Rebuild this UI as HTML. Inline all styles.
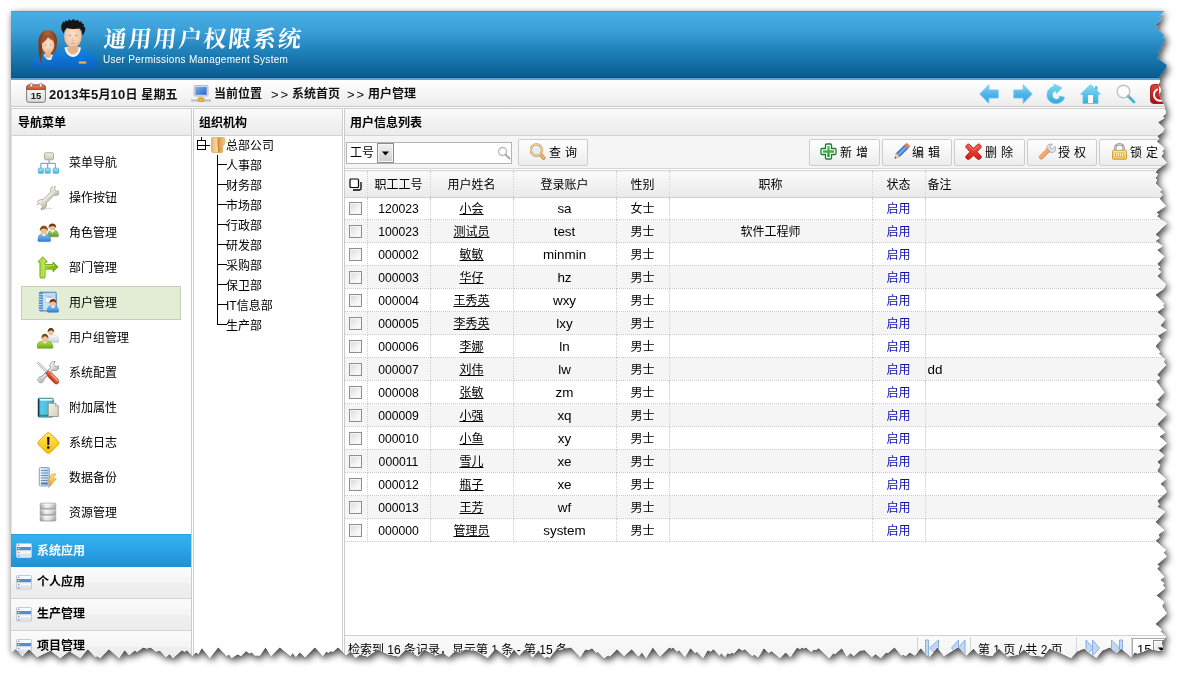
<!DOCTYPE html>
<html lang="zh-CN">
<head>
<meta charset="utf-8">
<title>通用用户权限系统</title>
<style>
*{box-sizing:border-box;margin:0;padding:0}
html,body{width:1185px;height:676px;overflow:hidden;background:#fff}
body{font-family:"Liberation Sans","Noto Sans CJK SC",sans-serif;font-size:12px;color:#000;position:relative}
#shadow{position:absolute;left:0;top:0;width:1185px;height:676px;filter:drop-shadow(2.500px 3.500px 3.500px rgba(0,0,0,.72)) drop-shadow(-1px 0 3px rgba(0,0,0,.07))}
#page{position:absolute;left:0;top:0;width:1185px;height:676px;background:#fff;overflow:hidden;clip-path:polygon(11px 11px,1164.4px 11px,1159.5px 16.3px,1162px 19.5px,1155.4px 24.4px,1157.9px 26.8px,1156.3px 28.5px,1164.4px 35px,1162.8px 37.4px,1166px 39.8px,1161.1px 44.7px,1162.8px 46.3px,1157.9px 52px,1160.3px 54.5px,1157px 57.7px,1166.8px 65px,1166px 68.3px,1158.7px 78px,1160.3px 81.3px,1158.2px 84.5px,1162px 90.2px,1158.7px 94.3px,1160.3px 97.5px,1164.4px 105.7px,1165.2px 110px,1166px 113.3px,1162.8px 116.5px,1164.4px 118.1px,1157.9px 122.2px,1164.4px 128.7px,1162.8px 132px,1157.1px 136px,1159.5px 139.3px,1156.3px 140.9px,1164.4px 148.2px,1162px 151.5px,1163.6px 153.1px,1161.1px 156.3px,1166.8px 162.8px,1157.9px 169.3px,1155.4px 172.6px,1157.9px 174.2px,1155.4px 178.3px,1157.1px 179.9px,1155.4px 183.2px,1162px 189.7px,1159.5px 192.1px,1162.8px 194.6px,1159.5px 198.6px,1166px 205.9px,1156.3px 212.4px,1158.7px 214px,1157.1px 216.5px,1162px 220px,1166.8px 223.3px,1155.4px 234.6px,1159.5px 237.9px,1155.4px 241.1px,1162.8px 246px,1157.1px 250.1px,1164.4px 256.6px,1157.1px 263.9px,1160.3px 267.2px,1157.9px 268.8px,1161.1px 272px,1157.1px 276.1px,1166px 284.2px,1163.6px 289.1px,1155.4px 294.8px,1164.4px 303.7px,1162.8px 305.4px,1164.4px 307px,1157.1px 311.9px,1165.2px 319.2px,1160.3px 325.7px,1164.4px 328.5px,1166.8px 330px,1157.9px 335.7px,1161.1px 339.8px,1155.4px 346.3px,1160.3px 352px,1158.7px 353.6px,1165.2px 359.3px,1163.6px 361.7px,1166px 365px,1157.1px 374.7px,1160.3px 378px,1156.3px 381.2px,1164.4px 392.6px,1157.1px 399.9px,1159.5px 401.5px,1155.4px 404.8px,1166.8px 414.6px,1157.1px 424.3px,1165.2px 432.4px,1159.5px 436.5px,1163.6px 440px,1166.8px 443.3px,1158.7px 450.6px,1164.4px 455.4px,1157.1px 462px,1160.3px 465.2px,1157.1px 470.9px,1166px 479px,1160.3px 483.9px,1164.4px 487.2px,1166.8px 492px,1157.1px 501px,1159.5px 504.2px,1157.1px 506.7px,1165.2px 511.5px,1155.4px 522.1px,1164.4px 530.2px,1158.7px 534.3px,1159.5px 537.6px,1155.4px 540.8px,1166px 550px,1163.6px 552.4px,1166.8px 556.5px,1157.1px 564.6px,1159.5px 566.3px,1157.1px 568.7px,1164.4px 576.8px,1160.3px 580.1px,1164.4px 583.3px,1162.8px 585px,1165.2px 588.2px,1156.3px 595.5px,1164.4px 602px,1162px 606.1px,1166.8px 613.4px,1155.4px 624px,1162px 629.7px,1160.3px 631.3px,1166px 636.2px,1164.4px 638.5px,1161.5px 642px,1163.3px 650.5px,1158px 650.6px,1153px 649.8px,1149.5px 648.5px,1144.4px 651px,1137.6px 653.5px,1134.7px 652.2px,1131.1px 657px,1121.2px 648.4px,1116.5px 652.7px,1109.8px 647.2px,1102.2px 650.5px,1096.3px 657.7px,1089.1px 652.7px,1084px 648.4px,1076.9px 651.4px,1071px 657.9px,1060px 652.7px,1049.5px 648.4px,1043.1px 656.5px,1030px 655.2px,1024.1px 649.3px,1018.2px 654.8px,1007.3px 656.5px,998.8px 648.4px,992.1px 656px,978.1px 653.9px,973.5px 648.4px,966.3px 655.6px,960px 648.4px,957.9px 647.2px,944px 656px,937.2px 647.2px,930px 656.5px,927.1px 655.6px,920.8px 648px,914.9px 655.6px,909.8px 652.2px,905.6px 656px,903px 654.3px,901.4px 655.6px,894.6px 647.2px,887.8px 653.1px,886.2px 652.2px,880.7px 657.9px,875.6px 653.9px,871.8px 656.9px,864.6px 650.1px,860px 650.5px,853.7px 656px,850.7px 653.1px,846.9px 656.5px,841.9px 648px,834.7px 654.3px,833.4px 653.1px,829.2px 657.9px,818.6px 648px,815.7px 650.1px,814px 649.3px,811.1px 651.8px,806px 647.2px,803.9px 648.4px,802.2px 647.2px,799.7px 648.9px,797.1px 647.2px,790.4px 656.9px,785.7px 652.2px,779.8px 657.9px,771.8px 651px,768.4px 652.7px,763.8px 648px,760px 654.5px,757.9px 657.3px,754.1px 654.3px,752.4px 656px,744.8px 648.9px,742.3px 650.5px,738.9px 648px,733.8px 653.5px,731.7px 652.2px,730px 653.9px,727.5px 653.1px,725px 656.9px,721.2px 653.1px,719.5px 655.6px,713.6px 648.9px,710.6px 651.4px,707.7px 650.1px,703px 657.9px,697.1px 651.8px,695px 652.7px,690.4px 648px,684.9px 656.9px,679px 650.1px,676.9px 651.4px,673.1px 647.2px,671.4px 648.4px,669.3px 647.2px,660px 656.5px,652.8px 647.2px,646.1px 657.9px,641.9px 652.2px,638.5px 656.5px,631.7px 649.1px,624.1px 656px,617px 648.9px,609.8px 656.5px,608.5px 655.2px,603.9px 657.9px,597.6px 651.4px,596.3px 652.7px,592.1px 648px,588.7px 650.1px,585.3px 649.3px,580.3px 656.9px,571px 647.2px,560px 649.7px,557px 648.4px,549.5px 657.7px,547.8px 656.5px,544.4px 657.7px,538.5px 650.1px,532.6px 657.3px,525px 649.3px,519.1px 655.6px,514px 649.3px,508.1px 657.7px,495.4px 648.4px,487.8px 657.7px,476px 651px,465.1px 649.3px,460px 652.7px,455.4px 651px,448.6px 656.9px,443.1px 652.7px,435.1px 655.6px,424.1px 649.3px,418.2px 656.5px,406px 649.3px,398.8px 656.5px,387.8px 654.3px,377.7px 649.3px,367.6px 656.5px,360px 654.5px,355.4px 657.7px,350.7px 651px,346.1px 655.2px,338.1px 647.2px,333px 651.8px,330.9px 651px,328.4px 652.7px,326.2px 651.4px,322.9px 656px,314.9px 647.2px,305.1px 657.3px,299.7px 652.2px,295.9px 656.9px,292.5px 653.1px,290.4px 656px,279.8px 647.2px,271px 656px,265.5px 647.2px,260px 655.6px,254.9px 655.6px,251.6px 652.2px,249.5px 653.5px,246.1px 651px,241px 656px,237.6px 654.3px,231.7px 657.9px,228.8px 654.2px,226.7px 656px,218.2px 647.2px,209.8px 658.1px,201.8px 648px,198.4px 653.9px,195.9px 652.2px,192.5px 656px,187px 650px,184.5px 651.8px,181.9px 650.1px,173.1px 657.9px,169.7px 653.9px,165.9px 656.9px,160px 650.5px,155.8px 651.4px,150.7px 647.2px,146.9px 648.4px,143.1px 647.2px,137.2px 651.8px,134.7px 650.3px,129.2px 655px,124.6px 650.1px,119.1px 658.1px,108.9px 648.9px,100.1px 657.9px,97.1px 656px,95.4px 656.9px,87.8px 649.1px,80.3px 657.9px,69.3px 651px,60.3px 658.1px,50.6px 650.5px,37.1px 656.9px,29.1px 648.9px,22.4px 656px,15.6px 648.9px,11px 652px)}
.abs{position:absolute}
svg{display:block}
#hdr{left:11px;top:11px;width:1180px;height:67px;background:linear-gradient(#49ade6 0%,#3a9ed7 30%,#1c7cb4 65%,#085c91 100%);border-top:1px solid #4c9bd0;border-bottom:1px solid #064f80}
#hdrline{left:11px;top:78px;width:1180px;height:2px;background:#68a1c9}
#title{left:102px;top:24px;font-family:"Liberation Serif","Noto Serif CJK SC",serif;font-weight:700;font-size:23px;letter-spacing:1.900px;transform:skewX(-6deg);transform-origin:0 100%;color:#fff;white-space:nowrap;line-height:32px}
#sub{left:103px;top:54px;font-size:10px;color:#fff;white-space:nowrap;line-height:12px;letter-spacing:0.280px}
#tb{left:11px;top:80px;width:1180px;height:27px;background:linear-gradient(#fff,#f6f6f6 50%,#ececec);border-bottom:1px solid #c9c9c9}
.tbt{top:81px;height:27px;line-height:27px;font-weight:700;font-size:12px;white-space:nowrap;color:#111}
.tbt b{font-size:13px}
.tbd{letter-spacing:.2px}
.gg{font-weight:400;letter-spacing:2px;font-size:13px}
.panel{top:108px;height:600px;border:1px solid #ccc;background:#fff}
.ph{position:absolute;left:0;top:0;right:0;height:27px;line-height:28px;font-weight:700;padding-left:6px;background:linear-gradient(#fafafa,#f1f1f1 60%,#ebebeb);border-bottom:1px solid #d3d3d3;white-space:nowrap}
.nt{height:20px;line-height:20px;white-space:nowrap}
.acc{width:180px;height:32px;line-height:31px;font-weight:700;background:linear-gradient(#fbfbfb,#f5f5f5 50%,#efefef 52%,#ececec);border-bottom:1px solid #d2d2d2;white-space:nowrap}
.acc.on{height:33px;line-height:32px;background:linear-gradient(#31b3f0,#2b9fe3 55%,#228ed7);color:#fff;border-bottom:0;border-top:1px solid #2d9fe0}
.acc svg{position:absolute;left:5px;top:8px}
.acc span{position:absolute;left:26px;top:0}
.tt{height:20px;line-height:20px;white-space:nowrap}
table{border-collapse:collapse;table-layout:fixed;width:881px}
td,th{height:23px;vertical-align:top;border-right:1px dotted #c8c8c8;border-bottom:1px dotted #c8c8c8;text-align:center;font-weight:400;white-space:nowrap;overflow:hidden;padding:0;font-size:12px;line-height:20px}
th{height:27px;line-height:23px;padding-top:3px;background:linear-gradient(#fbfbfb,#f2f2f2 50%,#e9e9e9);border-bottom:1px solid #d0d0d0;border-top:1px solid #d8d8d8}
th svg{margin:4px auto 0}
tr.alt td{background:#f5f5f5}
td{padding-top:2px}
tr.first td{height:22px;padding-top:1px}
td.u{text-decoration:underline}
td.b{color:#0e0eb4}
td.e{font-size:13.400px}
td.d{font-size:12.200px}
td.l,th.l{text-align:left;padding-left:2px}
.cb{display:inline-block;width:13px;height:13px;border:1px solid #8e8f8f;background:linear-gradient(135deg,#d8d8d8,#f4f4f4 60%,#fff);vertical-align:-2px;box-shadow:inset 0 0 0 1px #f4f4f4}
.btn{top:139px;height:27px;border:1px solid #ccc;border-radius:2px;background:linear-gradient(#fefefe,#f5f5f5 55%,#ececec)}
.bt{top:140px;height:27px;line-height:26px;font-size:12px;letter-spacing:4px;white-space:nowrap}
</style>
</head>
<body>
<div id="shadow">
<div id="page">
<div id="hdr" class="abs"></div>
<div id="hdrline" class="abs"></div>
<div id="title" class="abs">通用用户权限系统</div>
<div id="sub" class="abs">User Permissions Management System</div>
<div class="abs" style="left:25px;top:12px;width:80px;height:66px"><svg width="80" height="66" viewBox="25 12 80 66">
<defs>
<linearGradient id="lgB" x1="0" y1="0" x2="0" y2="1"><stop offset="0" stop-color="#1b86e0"/><stop offset=".6" stop-color="#0a6fd0"/><stop offset="1" stop-color="#0a5fb8"/></linearGradient>
<linearGradient id="lgB2" x1="0" y1="0" x2="0" y2="1"><stop offset="0" stop-color="#1a7fd8"/><stop offset="1" stop-color="#0c60b8"/></linearGradient>
<radialGradient id="lgF" cx=".5" cy=".45" r=".6"><stop offset="0" stop-color="#fbe3cf"/><stop offset=".7" stop-color="#f3c9a8"/><stop offset="1" stop-color="#d9a57e"/></radialGradient>
<linearGradient id="lgH" x1="0" y1="0" x2="1" y2="0"><stop offset="0" stop-color="#7a3a1c"/><stop offset=".5" stop-color="#b0633a"/><stop offset="1" stop-color="#7a3a1c"/></linearGradient>
<filter id="lgBl" x="-10%" y="-10%" width="120%" height="120%"><feGaussianBlur stdDeviation=".45"/></filter>
</defs>
<g filter="url(#lgBl)">
<!-- woman body -->
<path d="M33.500 69.600c-1.500 0-2.200-.8-2.200-2.200 0-6 2-9.900 7.200-11.400l5-1.500h8l4 2v13.100z" fill="url(#lgB2)"/>
<path d="M43.500 54.500c1 3.500 3.500 5.500 6 5.500s3.500-2 4-5z" fill="#e9f3fb"/>
<!-- woman hair back -->
<path d="M38.500 45c-.5-9 3-15 9.500-15s9.500 5.500 9 13c-.3 4-1.500 8-3 10.500h-12c-.5 4-1 8-.5 10.500-2.500-5-3-12-3-19z" fill="url(#lgH)"/>
<!-- woman neck+face -->
<path d="M45 50h6v7c-1 1.500-5 1.500-6 0z" fill="#e6b48f"/>
<ellipse cx="48" cy="45.300" rx="6.300" ry="8.200" fill="url(#lgF)"/>
<path d="M41 44c0-6 3-9.500 8-9 3 .3 5.500 2.500 6 6-3-.5-5.500-2-7-4-1.500 3-4 5.500-7 7z" fill="#9a5230"/>
<path d="M39 44c.3 8 .8 15 2.300 20 .4-6 .5-12 .7-19z" fill="#7a3a1c"/>
<ellipse cx="45.800" cy="45" rx="1.200" ry=".7" fill="#8a6a58" opacity=".4"/><ellipse cx="50.400" cy="45" rx="1.200" ry=".7" fill="#8a6a58" opacity=".4"/><ellipse cx="48.200" cy="50" rx="1.500" ry=".6" fill="#c0605a" opacity=".45"/>
<!-- man body -->
<path d="M53 69.700c-1.400 0-2.200-.8-2.200-2.300 0-7 1-13 5.200-15.300l8.500-4h16.500l9 4c4.800 2.400 6.900 8 6.900 15.300 0 1.500-.8 2.300-2.200 2.300z" fill="url(#lgB)"/>
<path d="M64.500 47.500c1 6 4.500 9.500 8.500 9.500s7-3.500 8-9.500l-2.500-.5h-11.500z" fill="#f2f8fd"/>
<path d="M66.300 47.500c1 4.300 3.500 7.300 6.700 7.300s5.400-3 6.200-7.300z" fill="#ecc4a2"/>
<!-- man face -->
<path d="M68.500 43h9v8c-2 2.500-7 2.500-9 0z" fill="#e3b08a"/>
<ellipse cx="72.900" cy="36.500" rx="8.800" ry="11.200" fill="url(#lgF)"/>
<ellipse cx="69.800" cy="35.500" rx="1.700" ry="1" fill="#8a6a58" opacity=".35"/><ellipse cx="76.200" cy="35.500" rx="1.700" ry="1" fill="#8a6a58" opacity=".35"/><ellipse cx="73" cy="43.300" rx="2.200" ry=".8" fill="#b0705a" opacity=".4"/><path d="M72.300 37v3.500h1.600" stroke="#c99a7c" stroke-width=".7" fill="none" opacity=".6"/>
<!-- man hair -->
<path d="M63.800 33.500c-2.700-3-3.300-7.200-1.800-9.800l1.200-2.200 1.300 1 1.200-2.300 1.800 1.300 1.500-2.200 2.200 1.400 2.300-1.700 1.700 1.800 2.800-1 1 1.900 2.600-.2.200 2 2.300.6-.7 2 1.700 1.300c.5 2.600-.4 5.600-2.700 8.100.2-3.200-.8-5.700-2.600-6.900-4 .8-9.400.6-12.900-.6-2 1.300-3.100 3.700-3.100 6.500z" fill="#151515"/>
<rect x="78.700" y="61.300" width="7.800" height="2.500" rx=".6" fill="#d9862a"/>
<rect x="79.300" y="61.800" width="6.600" height="1.500" fill="#f0b060"/>
</g>
</svg></div>
<div id="tb" class="abs"></div>
<div class="abs tbt tbd" style="left:49px"><b>2013</b>年<b>5</b>月<b>10</b>日 星期五</div>
<div class="abs tbt" style="left:214px">当前位置</div>
<div class="abs tbt gg" style="left:271px">&gt;&gt;</div>
<div class="abs tbt" style="left:292px">系统首页</div>
<div class="abs tbt gg" style="left:347px">&gt;&gt;</div>
<div class="abs tbt" style="left:368px">用户管理</div>
<div class="abs" style="left:26px;top:83px;width:20px;height:20px"><svg width="20" height="20" viewBox="0 0 20 20" ><defs><linearGradient id="g1" x1="0" y1="0" x2="0" y2="1"><stop offset="0" stop-color="#ffffff"/><stop offset="1" stop-color="#dcdcdc"/></linearGradient>
<linearGradient id="g2" x1="0" y1="0" x2="0" y2="1"><stop offset="0" stop-color="#f08a66"/><stop offset="1" stop-color="#d24a24"/></linearGradient></defs>
<rect x=".6" y="2" width="18.800" height="17.300" rx="2" fill="url(#g1)" stroke="#7a7a7a" stroke-width="1"/>
<path d="M1 6.500v-2.500c0-1.100.9-2 2-2h14c1.100 0 2 .9 2 2v2.500z" fill="url(#g2)" stroke="#a83a1a" stroke-width=".8"/>
<rect x="4" y=".3" width="2.600" height="3.800" rx="1" fill="#eee" stroke="#777" stroke-width=".7"/>
<rect x="13.400" y=".3" width="2.600" height="3.800" rx="1" fill="#eee" stroke="#777" stroke-width=".7"/>
<text x="10" y="16.300" text-anchor="middle" font-family="Liberation Sans,sans-serif" font-weight="700" font-size="9.500" fill="#222">15</text></svg></div><div class="abs" style="left:191px;top:85px;width:20px;height:18px"><svg width="20" height="18" viewBox="0 0 20 18" ><defs><linearGradient id="g3" x1="0" y1="0" x2="1" y2="1"><stop offset="0" stop-color="#7db2ee"/><stop offset="1" stop-color="#2a66c8"/></linearGradient></defs>
<rect x="3" y=".5" width="14" height="10.500" rx="1" fill="#e8eaee" stroke="#a9afb8" stroke-width=".8"/>
<rect x="4.300" y="1.800" width="11.400" height="8" fill="url(#g3)"/>
<path d="M8 11h4v2h-4z" fill="#c9cdd4"/>
<path d="M0 15.500h20" stroke="#b5bcc6" stroke-width="1.800"/>
<rect x="7" y="13" width="6" height="3.500" rx=".6" fill="#f2b43a" stroke="#c98a1a" stroke-width=".6"/></svg></div><div class="abs" style="left:979px;top:84px;width:20px;height:20px"><svg width="20" height="20" viewBox="0 0 20 20" ><defs><linearGradient id="g4" x1="0" y1="0" x2="0" y2="1"><stop offset="0" stop-color="#8fd6f7"/><stop offset=".5" stop-color="#4eb4ea"/><stop offset="1" stop-color="#3a9fe0"/></linearGradient></defs>
<path d="M.8 10l9-9.300v5.300h9.400v8h-9.400v5.300z" fill="url(#g4)" stroke="#6cc0ee" stroke-width=".8" stroke-linejoin="round"/></svg></div><div class="abs" style="left:1013px;top:84px;width:20px;height:20px"><svg width="20" height="20" viewBox="0 0 20 20" ><defs><linearGradient id="g5" x1="0" y1="0" x2="0" y2="1"><stop offset="0" stop-color="#8fd6f7"/><stop offset=".5" stop-color="#4eb4ea"/><stop offset="1" stop-color="#3a9fe0"/></linearGradient></defs>
<path d="M.8 10l9-9.300v5.300h9.400v8h-9.400v5.300z" transform="translate(20 0) scale(-1 1)" fill="url(#g5)" stroke="#6cc0ee" stroke-width=".8" stroke-linejoin="round"/></svg></div><div class="abs" style="left:1046px;top:84px;width:20px;height:20px"><svg width="20" height="20" viewBox="0 0 20 20" ><defs><linearGradient id="g6" x1="0" y1="0" x2="0" y2="1"><stop offset="0" stop-color="#7fdcf2"/><stop offset="1" stop-color="#2fa8d8"/></linearGradient></defs>
<path d="M13.600 12l5 1.300c-1.200 3.900-4.600 6.300-8.600 6.300-5 0-9-3.800-9-8.700 0-4.400 3.300-8 7.600-8.600l-.9-2.300 8.300 3.800-5.700 5.600-.5-2.700c-2 .5-3.500 2.200-3.500 4.300 0 2.400 1.900 4.300 4.300 4.300 1.700 0 2.900-.9 3-3.300z" fill="url(#g6)" stroke="#62c6e8" stroke-width=".6" stroke-linejoin="round"/></svg></div><div class="abs" style="left:1080px;top:84px;width:21px;height:20px"><svg width="21" height="20" viewBox="0 0 21 20" ><defs><linearGradient id="g7" x1="0" y1="0" x2="0" y2="1"><stop offset="0" stop-color="#86dcf4"/><stop offset="1" stop-color="#34aede"/></linearGradient></defs>
<path d="M10.500 .6l10 9.600h-2.500v9.300h-15v-9.300h-2.500z" fill="url(#g7)" stroke="#5cc4e8" stroke-width=".7" stroke-linejoin="round"/>
<path d="M15 2.200h2.500v4.500l-2.500-2.400z" fill="#4dbce6"/>
<rect x="8" y="11" width="5" height="8" fill="#fff"/></svg></div><div class="abs" style="left:1116px;top:84px;width:20px;height:20px"><svg width="20" height="20" viewBox="0 0 20 20" ><circle cx="7.500" cy="7.500" r="6.300" fill="#fff" fill-opacity=".7" stroke="#bfc3c7" stroke-width="1.400"/>
<path d="M12.300 12.300l5.700 5.700" stroke="#3fb4dc" stroke-width="2.800" stroke-linecap="round"/>
<path d="M12 12l1.500 1.500" stroke="#9aa" stroke-width="2"/></svg></div><div class="abs" style="left:1150px;top:84px;width:20px;height:20px"><svg width="20" height="20" viewBox="0 0 20 20" ><defs><linearGradient id="g8" x1="0" y1="0" x2="0" y2="1"><stop offset="0" stop-color="#e0443a"/><stop offset="1" stop-color="#a80f10"/></linearGradient></defs>
<rect x=".5" y=".5" width="19" height="19" rx="3.500" fill="url(#g8)" stroke="#8a0c0c" stroke-width=".8"/>
<path d="M7 5.500a6 6 0 1 0 6 0" fill="none" stroke="#fff" stroke-width="2" stroke-linecap="round"/><path d="M10 3.500v6.500" stroke="#fff" stroke-width="2" stroke-linecap="round"/></svg></div>
<div class="abs panel" style="left:11px;width:181px;border-left-color:#e4e4e4"><div class="ph">导航菜单</div></div>
<div class="abs" style="left:37px;top:151px;width:22px;height:24px"><svg width="22" height="24" viewBox="0 0 22 24"><defs><linearGradient id="n1" x1="0" y1="0" x2="0" y2="1"><stop offset="0" stop-color="#f1efe6"/><stop offset="1" stop-color="#cbc6b6"/></linearGradient><linearGradient id="n2" x1="0" y1="0" x2="0" y2="1"><stop offset="0" stop-color="#b6ebfa"/><stop offset="1" stop-color="#3db4dc"/></linearGradient></defs>
<path d="M12 9v3.300M3.900 17v-4.700h14.400v4.700M10.700 12.300v4.700" fill="none" stroke="#6f9aa8" stroke-width="1"/>
<rect x="7.500" y="1.800" width="9" height="7" rx="1" fill="url(#n1)" stroke="#aaa696" stroke-width=".9"/>
<rect x="1.400" y="17.200" width="5" height="5" rx=".5" fill="url(#n2)" stroke="#49a9cf" stroke-width=".8"/>
<rect x="8.200" y="17.200" width="5" height="5" rx=".5" fill="url(#n2)" stroke="#49a9cf" stroke-width=".8"/>
<rect x="16.200" y="17.200" width="5.300" height="5" rx=".5" fill="url(#n2)" stroke="#49a9cf" stroke-width=".8"/></svg></div><div class="abs nt" style="left:69px;top:153px">菜单导航</div>
<div class="abs" style="left:37px;top:186px;width:22px;height:24px"><svg width="22" height="24" viewBox="0 0 22 24"><defs><linearGradient id="n3" x1="0" y1="0" x2="0" y2="1"><stop offset="0" stop-color="#f6f4ee"/><stop offset="0.5" stop-color="#dedacf"/><stop offset="1" stop-color="#b9b4a6"/></linearGradient></defs>
<ellipse cx="9" cy="22.400" rx="6.500" ry="1" fill="#000" opacity=".13"/>
<g transform="translate(11.500 11.500) rotate(-45)">
<path d="M5.56 -2.30A5.0 5.0 0 0 1 13.72 -3.35L10.30 -2.00L10.30 2.00L13.72 3.35A5.0 5.0 0 0 1 5.56 2.30L-5.56 2.30A5.0 5.0 0 0 1 -13.72 3.35L-10.30 2.00L-10.30 -2.00L-13.72 -3.35A5.0 5.0 0 0 1 -5.56 -2.30Z" fill="url(#n3)" stroke="#a39e92" stroke-width=".8" stroke-linejoin="round"/>
<path d="M-6 -.9h12" stroke="#fff" stroke-width=".9" opacity=".75"/>
</g></svg></div><div class="abs nt" style="left:69px;top:188px">操作按钮</div>
<div class="abs" style="left:37px;top:221px;width:22px;height:24px"><svg width="22" height="24" viewBox="0 0 22 24"><defs><linearGradient id="n4" x1="0" y1="0" x2="0" y2="1"><stop offset="0" stop-color="#a8d36a"/><stop offset="1" stop-color="#5f9a2c"/></linearGradient></defs>
<path d="M11 14.8c0-5.1 2.1-5.8 5.2-5.8s5.2 1.7 5.2 5.8c0 .6-.4 1-1 1h-8.5c-.6 0-1-.4-1-1z" fill="url(#n4)" stroke="#5f9a2c" stroke-width=".6"/>
<path d="M12.6 9l2.8 3.0 2.8-3.0z" fill="#fff" opacity=".9"/>
<ellipse cx="15.4" cy="6.3" rx="3.2" ry="3.3" fill="#eec096"/>
<path d="M11.60 7.02C11.17 1.09 19.63 1.09 19.20 7.02L18.03 5.80Q16.13 3.98 12.77 5.80Z" fill="#6b3a14"/><defs><linearGradient id="n5" x1="0" y1="0" x2="0" y2="1"><stop offset="0" stop-color="#8cc4f0"/><stop offset="1" stop-color="#2f7fd0"/></linearGradient></defs>
<path d="M1 19.6c0-6.1 2.5-7.1 6.3-7.1s6.3 2.0 6.3 7.1c0 .6-.4 1-1 1h-10.7c-.6 0-1-.4-1-1z" fill="url(#n5)" stroke="#2f7fd0" stroke-width=".6"/>
<path d="M3.9 12.5l3.0 3.0 3.0-3.0z" fill="#fff" opacity=".9"/>
<ellipse cx="6.9" cy="9.2" rx="3.4" ry="4.0" fill="#eec096"/>
<path d="M2.84 10.07C2.38 2.90 11.42 2.90 10.96 10.07L9.71 8.60Q7.68 6.39 4.09 8.60Z" fill="#8a4a18"/></svg></div><div class="abs nt" style="left:69px;top:223px">角色管理</div>
<div class="abs" style="left:37px;top:256px;width:22px;height:24px"><svg width="22" height="24" viewBox="0 0 22 24"><defs><linearGradient id="n6" x1="0" y1="0" x2="1" y2="0"><stop offset="0" stop-color="#c4e860"/><stop offset="0.5" stop-color="#94cc20"/><stop offset="1" stop-color="#78b010"/></linearGradient></defs>
<path d="M5.700 .8l4.600 5.200h-2.300v2.500c0 0 .8 0 1.500 0h6.500v-2.500l5 4.800-5 4.900v-2.600h-5.500c-1.500 0-2.500 1-2.500 2.500v5.600c0 .5-.4.800-.9.800h-3.200c-.5 0-.9-.3-.9-.8v-15.200h-2z" fill="url(#n6)" stroke="#6a9c10" stroke-width=".9" stroke-linejoin="round"/>
<path d="M5.700 2.500l2.300 2.700h-1.200v16" fill="none" stroke="#e4f6a0" stroke-width=".9" opacity=".75"/>
<path d="M9 9.400h7.500v-1.300" fill="none" stroke="#e4f6a0" stroke-width=".8" opacity=".7"/></svg></div><div class="abs nt" style="left:69px;top:258px">部门管理</div>
<div class="abs" style="left:21px;top:286px;width:160px;height:34px;background:#e3ecd4;border:1px solid #c6cfb8"></div>
<div class="abs" style="left:37px;top:291px;width:22px;height:24px"><svg width="22" height="24" viewBox="0 0 22 24"><defs><linearGradient id="n7" x1="0" y1="0" x2="1" y2="0"><stop offset="0" stop-color="#3f86c8"/><stop offset="1" stop-color="#8cc0ec"/></linearGradient></defs>
<rect x="2.300" y="1.200" width="17" height="18.800" rx="1" fill="url(#n7)" stroke="#3a78b8" stroke-width=".8"/>
<rect x="5.800" y="2" width="12.700" height="17.200" fill="#c9e1f6" stroke="#8db6dc" stroke-width=".5"/>
<rect x="8.500" y="4.500" width="8" height="7" fill="#f4f8fc" stroke="#9fbfdc" stroke-width=".5"/>
<path d="M9.500 6h6" stroke="#5a7fa8" stroke-width=".8"/>
<path d="M1.500 3.500h3.300M1.500 6h3.300M1.500 8.500h3.300M1.500 11h3.300M1.500 13.500h3.300M1.500 16h3.300M1.500 18.500h3.300" stroke="#cfe2f4" stroke-width="1"/><defs><linearGradient id="n8" x1="0" y1="0" x2="0" y2="1"><stop offset="0" stop-color="#8cc4f0"/><stop offset="1" stop-color="#2f7fd0"/></linearGradient></defs>
<path d="M10.3 20.2c0-4.9 2.2-5.6 5.6-5.6s5.6 1.6 5.6 5.6c0 .6-.4 1-1 1h-9.2c-.6 0-1-.4-1-1z" fill="url(#n8)" stroke="#2f7fd0" stroke-width=".6"/>
<path d="M13.3 14.6l2.6 3.0 2.6-3.0z" fill="#fff" opacity=".9"/>
<ellipse cx="15.9" cy="11.8" rx="3.0" ry="3.3" fill="#eec096"/>
<path d="M12.36 12.52C11.96 6.59 19.84 6.59 19.44 12.52L18.35 11.30Q16.58 9.48 13.45 11.30Z" fill="#6b3410"/></svg></div><div class="abs nt" style="left:69px;top:293px">用户管理</div>
<div class="abs" style="left:37px;top:326px;width:22px;height:24px"><svg width="22" height="24" viewBox="0 0 22 24"><defs><linearGradient id="n9" x1="0" y1="0" x2="0" y2="1"><stop offset="0" stop-color="#ffffff"/><stop offset="1" stop-color="#c3ccd6"/></linearGradient></defs>
<path d="M10 15.399999999999999c0-5.7 2.4-6.6 6.0-6.6s6.0 1.9 6.0 6.6c0 .6-.4 1-1 1h-10.0c-.6 0-1-.4-1-1z" fill="url(#n9)" stroke="#c3ccd6" stroke-width=".6"/>
<path d="M11.5 8.8l2.4 3.0 2.4-3.0z" fill="#e8eef4" opacity=".9"/>
<ellipse cx="13.9" cy="5.8" rx="2.8" ry="3.5" fill="#eec096"/>
<path d="M10.57 6.58C10.19 0.34 17.61 0.34 17.23 6.58L16.20 5.30Q14.54 3.38 11.60 5.30Z" fill="#4a2c12"/><defs><linearGradient id="n10" x1="0" y1="0" x2="0" y2="1"><stop offset="0" stop-color="#b8e04e"/><stop offset="1" stop-color="#6aa81a"/></linearGradient></defs>
<path d="M0 21.3c0-5.5 3.2-6.3 8.0-6.3s8.0 1.8 8.0 6.3c0 .6-.4 1-1 1h-14.0c-.6 0-1-.4-1-1z" fill="url(#n10)" stroke="#6aa81a" stroke-width=".6"/>
<path d="M5.3 15l2.6 3.0 2.6-3.0z" fill="#e8f4c8" opacity=".9"/>
<ellipse cx="7.9" cy="11.9" rx="3.0" ry="3.9" fill="#eec096"/>
<path d="M4.36 12.81C3.96 5.94 11.84 5.94 11.44 12.81L10.35 11.40Q8.58 9.29 5.45 11.40Z" fill="#6b4a1c"/></svg></div><div class="abs nt" style="left:69px;top:328px">用户组管理</div>
<div class="abs" style="left:37px;top:361px;width:22px;height:24px"><svg width="22" height="24" viewBox="0 0 22 24"><defs><linearGradient id="n11" x1="0" y1="0" x2="0" y2="1"><stop offset="0" stop-color="#fcfcfc"/><stop offset="1" stop-color="#b8b8b8"/></linearGradient><linearGradient id="n12" x1="0" y1="0" x2="0" y2="1"><stop offset="0" stop-color="#f6a888"/><stop offset="0.5" stop-color="#e25430"/><stop offset="1" stop-color="#b83418"/></linearGradient></defs>
<g transform="translate(10.800 11.800) rotate(-45)">
<path d="M5.42 -1.70A4.7 4.7 0 0 1 13.40 -3.02L10.10 -1.90L10.10 1.90L13.40 3.02A4.7 4.7 0 0 1 5.42 1.70L-7.33 1.70A3 3 0 1 1 -7.33 -1.70Z" fill="url(#n11)" stroke="#8a8a8a" stroke-width=".8" stroke-linejoin="round"/>
<circle cx="-9.800" cy="0" r="1" fill="#fff" stroke="#888" stroke-width=".6"/>
</g>
<g transform="translate(10.800 11.800) rotate(45)">
<path d="M-14 -.9h13v1.800h-13z" fill="#f2f2f2" stroke="#8c8c8c" stroke-width=".7"/>
<path d="M-1.200 -1.700h2.700l1.500-.9h8.700c1.800 0 3 1.100 3 2.600s-1.200 2.600-3 2.600h-8.700l-1.500-.9h-2.700z" fill="url(#n12)" stroke="#a83018" stroke-width=".7"/>
<path d="M3.500 -1.400h8.500" stroke="#ffd0c0" stroke-width=".9" opacity=".8"/>
</g></svg></div><div class="abs nt" style="left:69px;top:363px">系统配置</div>
<div class="abs" style="left:37px;top:396px;width:22px;height:24px"><svg width="22" height="24" viewBox="0 0 22 24"><defs><linearGradient id="n13" x1="0" y1="0" x2="1" y2="0"><stop offset="0" stop-color="#2fa0c8"/><stop offset="0.2" stop-color="#5ccbe8"/><stop offset="1" stop-color="#38b0d4"/></linearGradient><linearGradient id="n14" x1="0" y1="0" x2="1" y2="1"><stop offset="0" stop-color="#f4f2e6"/><stop offset="1" stop-color="#d4d0bc"/></linearGradient></defs>
<path d="M2.200 2.300h13c.6 0 1 .4 1 1v16.700c0 .6-.4 1-1 1h-13c-.6 0-1-.4-1-1v-16.700c0-.6.4-1 1-1z" fill="url(#n13)" stroke="#1c5f7c" stroke-width=".9"/>
<path d="M2.500 2.800h13.200v1.800h-13.200z" fill="#f4fbfe"/>
<path d="M1.700 3v17.500" stroke="#17384a" stroke-width="1.300"/>
<path d="M2.500 19.300h13" stroke="#16627e" stroke-width=".8"/>
<path d="M11.300 7.200h7l3 3v10.300h-10z" fill="url(#n14)" stroke="#8f8d7e" stroke-width=".8" stroke-linejoin="round"/>
<path d="M18.300 7.200v3h3z" fill="#faf9f2" stroke="#8f8d7e" stroke-width=".6" stroke-linejoin="round"/></svg></div><div class="abs nt" style="left:69px;top:398px">附加属性</div>
<div class="abs" style="left:37px;top:431px;width:22px;height:24px"><svg width="22" height="24" viewBox="0 0 22 24"><defs><linearGradient id="n15" x1="0" y1="0" x2="0" y2="1"><stop offset="0" stop-color="#ffe75a"/><stop offset="1" stop-color="#f8bc08"/></linearGradient></defs>
<path d="M11.300 1.700c.8 0 1.500.3 2.100.9l7.400 7.400c1.100 1.100 1.100 2.900 0 4l-7.400 7.400c-1.100 1.100-3.100 1.100-4.200 0l-7.400-7.400c-1.100-1.100-1.100-2.900 0-4l7.400-7.400c.6-.6 1.300-.9 2.100-.9z" fill="url(#n15)" stroke="#d8a400" stroke-width=".9"/>
<path d="M10.100 6h2.400l-.3 8h-1.800z" fill="#141414"/><rect x="10.100" y="15.300" width="2.400" height="2.400" rx=".6" fill="#141414"/></svg></div><div class="abs nt" style="left:69px;top:433px">系统日志</div>
<div class="abs" style="left:37px;top:466px;width:22px;height:24px"><svg width="22" height="24" viewBox="0 0 22 24"><defs><linearGradient id="n16" x1="0" y1="0" x2="1" y2="0"><stop offset="0" stop-color="#eaf2fa"/><stop offset="1" stop-color="#b4cce6"/></linearGradient><linearGradient id="n17" x1="0" y1="0" x2="0" y2="1"><stop offset="0" stop-color="#ffe88a"/><stop offset="1" stop-color="#f0a420"/></linearGradient></defs>
<rect x="2.300" y="1.500" width="10" height="18.500" rx="1.200" fill="url(#n16)" stroke="#7d9cc0" stroke-width=".9"/>
<path d="M4 4.500h6.800M4 7h6.800M4 9.500h6.800M4 12h6.800M4 14.500h6.800" stroke="#6a8fb8" stroke-width="1.100"/>
<rect x="4" y="16.500" width="6.800" height="2" fill="#4a78b0"/>
<path d="M15 8l-4.200 7h3.200l-2.300 6.500 7.700-8.700h-3.600l3-4.800z" fill="url(#n17)" stroke="#d89820" stroke-width=".7" stroke-linejoin="round"/></svg></div><div class="abs nt" style="left:69px;top:468px">数据备份</div>
<div class="abs" style="left:37px;top:501px;width:22px;height:24px"><svg width="22" height="24" viewBox="0 0 22 24"><defs><linearGradient id="n19" x1="0" y1="0" x2="1" y2="0"><stop offset="0" stop-color="#9c9c9c"/><stop offset="0.35" stop-color="#f2f2f2"/><stop offset="0.6" stop-color="#e6e6e6"/><stop offset="1" stop-color="#a4a4a4"/></linearGradient>
<linearGradient id="n18" x1="0" y1="0" x2="0" y2="1"><stop offset="0" stop-color="#fff" stop-opacity=".55"/><stop offset=".5" stop-color="#fff" stop-opacity="0"/><stop offset="1" stop-color="#000" stop-opacity=".12"/></linearGradient></defs><rect x="3.200" y="2.2" width="15.600" height="5.600" rx=".8" fill="url(#n19)" stroke="#9c9c9c" stroke-width=".8"/><rect x="3.600" y="2.6" width="14.800" height="4.800" rx=".6" fill="url(#n18)"/><rect x="3.200" y="8.3" width="15.600" height="5.600" rx=".8" fill="url(#n19)" stroke="#9c9c9c" stroke-width=".8"/><rect x="3.600" y="8.700000000000001" width="14.800" height="4.800" rx=".6" fill="url(#n18)"/><rect x="3.200" y="14.4" width="15.600" height="5.600" rx=".8" fill="url(#n19)" stroke="#9c9c9c" stroke-width=".8"/><rect x="3.600" y="14.8" width="14.800" height="4.800" rx=".6" fill="url(#n18)"/></svg></div><div class="abs nt" style="left:69px;top:503px">资源管理</div>
<div class="abs acc on" style="left:11px;top:534px"><svg width="16" height="15" viewBox="0 0 16 15" ><rect x=".5" y=".5" width="15" height="14" rx="1.200" fill="#f7f8fa" stroke="#c3cad3"/>
<rect x="1" y="4" width="14" height="3.200" fill="#4f8fd2"/>
<path d="M1 7.700h14M1 11.200h14" stroke="#c9cfd8" stroke-width=".8"/>
<path d="M1 11.500h14v2c0 .5-.3 1-1 1h-12c-.7 0-1-.5-1-1z" fill="#dfe3e9"/>
<circle cx="2.800" cy="2.300" r=".7" fill="#5f7fa8"/><circle cx="2.800" cy="5.600" r=".7" fill="#fff"/><circle cx="2.800" cy="9.400" r=".7" fill="#5f7fa8"/><circle cx="2.800" cy="13" r=".7" fill="#5f7fa8"/></svg><span>系统应用</span></div>
<div class="abs acc" style="left:11px;top:567px"><svg width="16" height="15" viewBox="0 0 16 15" ><rect x=".5" y=".5" width="15" height="14" rx="1.200" fill="#f7f8fa" stroke="#c3cad3"/>
<rect x="1" y="4" width="14" height="3.200" fill="#4f8fd2"/>
<path d="M1 7.700h14M1 11.200h14" stroke="#c9cfd8" stroke-width=".8"/>
<path d="M1 11.500h14v2c0 .5-.3 1-1 1h-12c-.7 0-1-.5-1-1z" fill="#dfe3e9"/>
<circle cx="2.800" cy="2.300" r=".7" fill="#5f7fa8"/><circle cx="2.800" cy="5.600" r=".7" fill="#fff"/><circle cx="2.800" cy="9.400" r=".7" fill="#5f7fa8"/><circle cx="2.800" cy="13" r=".7" fill="#5f7fa8"/></svg><span>个人应用</span></div>
<div class="abs acc" style="left:11px;top:599px"><svg width="16" height="15" viewBox="0 0 16 15" ><rect x=".5" y=".5" width="15" height="14" rx="1.200" fill="#f7f8fa" stroke="#c3cad3"/>
<rect x="1" y="4" width="14" height="3.200" fill="#4f8fd2"/>
<path d="M1 7.700h14M1 11.200h14" stroke="#c9cfd8" stroke-width=".8"/>
<path d="M1 11.500h14v2c0 .5-.3 1-1 1h-12c-.7 0-1-.5-1-1z" fill="#dfe3e9"/>
<circle cx="2.800" cy="2.300" r=".7" fill="#5f7fa8"/><circle cx="2.800" cy="5.600" r=".7" fill="#fff"/><circle cx="2.800" cy="9.400" r=".7" fill="#5f7fa8"/><circle cx="2.800" cy="13" r=".7" fill="#5f7fa8"/></svg><span>生产管理</span></div>
<div class="abs acc" style="left:11px;top:631px"><svg width="16" height="15" viewBox="0 0 16 15" ><rect x=".5" y=".5" width="15" height="14" rx="1.200" fill="#f7f8fa" stroke="#c3cad3"/>
<rect x="1" y="4" width="14" height="3.200" fill="#4f8fd2"/>
<path d="M1 7.700h14M1 11.200h14" stroke="#c9cfd8" stroke-width=".8"/>
<path d="M1 11.500h14v2c0 .5-.3 1-1 1h-12c-.7 0-1-.5-1-1z" fill="#dfe3e9"/>
<circle cx="2.800" cy="2.300" r=".7" fill="#5f7fa8"/><circle cx="2.800" cy="5.600" r=".7" fill="#fff"/><circle cx="2.800" cy="9.400" r=".7" fill="#5f7fa8"/><circle cx="2.800" cy="13" r=".7" fill="#5f7fa8"/></svg><span>项目管理</span></div>

<div class="abs panel" style="left:193px;width:150px"><div class="ph" style="padding-left:5px">组织机构</div></div>
<svg class="abs" style="left:195px;top:135px" width="36" height="200" viewBox="0 0 36 200" shape-rendering="crispEdges" fill="none" stroke="#000" stroke-width="1"><path d="M6.5 1.5v4M2.5 5.5h8v9h-8zM2.5 10.5h8M10.5 10.5h4"/><path d="M22.5 20v169.5h9"/><path d="M22.5 29.5h9"/><path d="M22.5 49.5h9"/><path d="M22.5 69.5h9"/><path d="M22.5 89.5h9"/><path d="M22.5 109.5h9"/><path d="M22.5 129.5h9"/><path d="M22.5 149.5h9"/><path d="M22.5 169.5h9"/></svg>
<div class="abs" style="left:211px;top:137px;width:15px;height:16px"><svg width="14" height="16" viewBox="0 0 14 16" ><defs><linearGradient id="g9" x1="0" y1="0" x2="1" y2="0"><stop offset="0" stop-color="#e9b468"/><stop offset=".45" stop-color="#f8dca8"/><stop offset=".55" stop-color="#d99a48"/><stop offset="1" stop-color="#f1c888"/></linearGradient></defs>
<path d="M1.500 .5h11c.7 0 1.200.5 1.200 1.200v5l-2 2.500v5.500c0 .5-.4.800-.9.800h-9.300c-.7 0-1.200-.5-1.200-1.200v-12.600c0-.7.500-1.200 1.200-1.200z" fill="url(#g9)" stroke="#d59a4c" stroke-width=".6"/>
<path d="M7 1v8.500l.8 1v4.500" stroke="#b87a2c" stroke-width=".8" fill="none"/></svg></div><div class="abs tt" style="left:226px;top:136px">总部公司</div>
<div class="abs tt" style="left:226px;top:156px">人事部</div>
<div class="abs tt" style="left:226px;top:176px">财务部</div>
<div class="abs tt" style="left:226px;top:196px">市场部</div>
<div class="abs tt" style="left:226px;top:216px">行政部</div>
<div class="abs tt" style="left:226px;top:236px">研发部</div>
<div class="abs tt" style="left:226px;top:256px">采购部</div>
<div class="abs tt" style="left:226px;top:276px">保卫部</div>
<div class="abs tt" style="left:226px;top:296px">IT信息部</div>
<div class="abs tt" style="left:226px;top:316px">生产部</div>

<div class="abs panel" style="left:344px;width:860px"><div class="ph" style="padding-left:5px">用户信息列表</div></div>
<div class="abs" style="left:345px;top:136px;width:860px;height:33px;background:#f5f5f5;border-bottom:1px solid #d5d5d5"></div><div class="abs" style="left:346px;top:142px;width:166px;height:22px;border:1px solid #b4b4b4;background:#fff"></div><div class="abs" style="left:350px;top:142px;height:22px;line-height:22px;font-size:12px">工号</div><div class="abs" style="left:377px;top:143px;width:17px;height:20px;border:1px solid #8c8c8c;background:linear-gradient(#f0f0f0,#e2e2e2 45%,#cfcfcf);box-shadow:inset 0 0 0 1px #f6f6f6"><svg width="15" height="18" viewBox="0 0 15 18" style="position:absolute;left:0;top:0"><path d="M4 7.5h7l-3.5 4z" fill="#000"/></svg></div><div class="abs" style="left:497px;top:146px;width:14px;height:14px"><svg width="14" height="14" viewBox="0 0 14 14" ><circle cx="5.500" cy="5.500" r="4" fill="#fff" stroke="#b9b9b9" stroke-width="1.300"/><path d="M8.500 8.500l4 4" stroke="#a9a9a9" stroke-width="2" stroke-linecap="round"/></svg></div>
<div class="abs btn" style="left:518px;width:70px"></div><div class="abs" style="left:530px;top:143px;width:17px;height:17px"><svg width="17" height="17" viewBox="0 0 17 17" ><path d="M10.300 11.200l3.300 3.700" stroke="#b98a48" stroke-width="3.800" stroke-linecap="round"/>
<path d="M10.300 11.200l3.300 3.700" stroke="#e9b56c" stroke-width="2.400" stroke-linecap="round"/>
<circle cx="6.400" cy="7.100" r="5.600" fill="#e4ecfa" stroke="#c59c5c" stroke-width="2.400"/>
<circle cx="6.400" cy="7.100" r="5.600" fill="none" stroke="#ecd3a4" stroke-width="1.300"/>
<path d="M3.600 5.800c.5-1.400 1.700-2.200 3-2.200" stroke="#fff" stroke-width="1.100" fill="none" opacity=".9"/></svg></div><div class="abs bt" style="left:549px">查询</div>
<div class="abs btn" style="left:809px;width:71px"></div><div class="abs" style="left:820px;top:143px;width:17px;height:17px"><svg width="17" height="17" viewBox="0 0 17 17" ><defs><linearGradient id="g10" x1="0" y1="0" x2="0" y2="1"><stop offset="0" stop-color="#5fd060"/><stop offset="1" stop-color="#1a9426"/></linearGradient></defs>
<path d="M6.500 1h4c.6 0 1 .4 1 1v3.500h3.500c.6 0 1 .4 1 1v4c0 .6-.4 1-1 1h-3.500v3.500c0 .6-.4 1-1 1h-4c-.6 0-1-.4-1-1v-3.500h-3.500c-.6 0-1-.4-1-1v-4c0-.6.400-1 1-1h3.500v-3.500c0-.6.400-1 1-1z" fill="#fff" stroke="#1f7a28" stroke-width="1.300" stroke-linejoin="round"/>
<path d="M7.300 3h2.400v4.300h4.300v2.400h-4.300v4.300h-2.400v-4.300h-4.300v-2.400h4.300z" fill="url(#g10)"/></svg></div><div class="abs bt" style="left:840px">新增</div>
<div class="abs btn" style="left:882px;width:70px"></div><div class="abs" style="left:893px;top:143px;width:17px;height:17px"><svg width="17" height="17" viewBox="0 0 17 17" ><path d="M11.500 2.200l3.300 3.300-8.300 8.300-3.300-3.300z" fill="#3a78d0" stroke="#1f4f9c" stroke-width=".7"/>
<path d="M12.300 3l1.700 1.700-8.300 8.300-1.700-1.700z" fill="#6fa4ea"/>
<path d="M11.500 2.200l1.300-1.300c.5-.5 1.200-.5 1.700 0l1.600 1.600c.5.500.5 1.200 0 1.700l-1.300 1.300z" fill="#e8835a" stroke="#b8542e" stroke-width=".6"/>
<path d="M3.200 10.500l3.300 3.300-4.800 1.700z" fill="#f6d9a8" stroke="#b99a6a" stroke-width=".5"/>
<path d="M1.700 15.500l.6-1.800 1.200 1.200z" fill="#333"/></svg></div><div class="abs bt" style="left:912px">编辑</div>
<div class="abs btn" style="left:954px;width:71px"></div><div class="abs" style="left:965px;top:143px;width:17px;height:17px"><svg width="17" height="17" viewBox="0 0 17 17" ><defs><linearGradient id="g11" x1="0" y1="0" x2="0" y2="1"><stop offset="0" stop-color="#f8594a"/><stop offset="1" stop-color="#cf1a14"/></linearGradient></defs>
<path d="M4.200 1.300l4.300 3.900 4.300-3.900c.6-.5 1.300-.5 1.800 0l1.400 1.400c.5.500.5 1.200 0 1.800l-3.900 4.300 3.900 4.300c.5.600.5 1.300 0 1.800l-1.400 1.400c-.5.500-1.200.500-1.800 0l-4.300-3.900-4.300 3.900c-.6.500-1.300.500-1.800 0l-1.400-1.400c-.5-.5-.5-1.200 0-1.800l3.900-4.300-3.900-4.300c-.5-.6-.5-1.300 0-1.800l1.400-1.400c.5-.5 1.200-.5 1.800 0z" fill="url(#g11)" stroke="#b81410" stroke-width=".8" stroke-linejoin="round"/>
<path d="M3.300 2.800l5.200 4.700 5.200-4.700" fill="none" stroke="#ff9a8c" stroke-width=".9" opacity=".7"/></svg></div><div class="abs bt" style="left:985px">删除</div>
<div class="abs btn" style="left:1027px;width:70px"></div><div class="abs" style="left:1039px;top:143px;width:17px;height:17px"><svg width="17" height="17" viewBox="0 0 17 17" ><defs><linearGradient id="g12" x1="0" y1="0" x2="1" y2="1"><stop offset="0" stop-color="#fbc79a"/><stop offset="1" stop-color="#ee8a48"/></linearGradient></defs>
<path d="M15.600 3.600l-2.400 2.300-1.900-.3-.4-1.900 2.400-2.400c-1.700-.6-3.500-.1-4.500 1-1 1.100-1.300 2.600-.8 4l1.600 2.200 2.100.8c1.400.500 3 .1 4-.9 1.200-1.200 1.400-3 .5-4.800z" fill="#dfe3e8" stroke="#8f969e" stroke-width=".7"/>
<path d="M10.800 8.300l-6.900 7c-.9.900-2.300.900-3 .1-.8-.8-.7-2.100.2-3l7-6.800z" fill="url(#g12)" stroke="#d0743a" stroke-width=".7"/></svg></div><div class="abs bt" style="left:1058px">授权</div>
<div class="abs btn" style="left:1099px;width:71px"></div><div class="abs" style="left:1111px;top:143px;width:17px;height:17px"><svg width="17" height="17" viewBox="0 0 17 17" ><defs><linearGradient id="g13" x1="0" y1="0" x2="0" y2="1"><stop offset="0" stop-color="#fde9a0"/><stop offset="1" stop-color="#f2c04c"/></linearGradient></defs>
<path d="M4.300 8v-2.600c0-2.400 1.800-4.200 4.200-4.200s4.200 1.800 4.200 4.200v2.600" fill="none" stroke="#8e8e8e" stroke-width="2.400"/>
<path d="M4.300 8v-2.600c0-2.400 1.800-4.200 4.200-4.200s4.200 1.800 4.200 4.200v2.600" fill="none" stroke="#d9d9d9" stroke-width="1"/>
<rect x="1.500" y="7.300" width="14" height="9" rx="1" fill="url(#g13)" stroke="#d09a2a" stroke-width=".9"/>
<rect x="4.300" y="10" width="8.400" height="3.600" fill="#fff6d4" stroke="#d09a2a" stroke-width=".6"/>
<path d="M6.500 11v1.600M8.500 11v1.600M10.500 11v1.600" stroke="#c98a1a" stroke-width=".9"/></svg></div><div class="abs bt" style="left:1130px">锁定</div>

<table class="abs" style="left:345px;top:170px"><colgroup><col style="width:22px"><col style="width:63px"><col style="width:83px"><col style="width:103px"><col style="width:53px"><col style="width:203px"><col style="width:53px"><col style="width:301px"></colgroup>
<tr><th><svg width="14" height="14" viewBox="0 0 14 14" ><rect x="1" y="1" width="8.500" height="8.500" rx="1" fill="#fff" stroke="#000" stroke-width="1.200"/><path d="M12 4v6.500c0 .8-.5 1.500-1.500 1.500h-6.500" fill="none" stroke="#000" stroke-width="1.300"/></svg></th><th>职工工号</th><th>用户姓名</th><th>登录账户</th><th>性别</th><th>职称</th><th>状态</th><th class="l">备注</th></tr>
<tr class="first"><td><i class="cb"></i></td><td class="d">120023</td><td class="u">小会</td><td class="e">sa</td><td>女士</td><td></td><td class="b">启用</td><td class="l e"></td></tr>
<tr class="alt"><td><i class="cb"></i></td><td class="d">100023</td><td class="u">测试员</td><td class="e">test</td><td>男士</td><td>软件工程师</td><td class="b">启用</td><td class="l e"></td></tr>
<tr><td><i class="cb"></i></td><td class="d">000002</td><td class="u">敏敏</td><td class="e">minmin</td><td>男士</td><td></td><td class="b">启用</td><td class="l e"></td></tr>
<tr class="alt"><td><i class="cb"></i></td><td class="d">000003</td><td class="u">华仔</td><td class="e">hz</td><td>男士</td><td></td><td class="b">启用</td><td class="l e"></td></tr>
<tr><td><i class="cb"></i></td><td class="d">000004</td><td class="u">王秀英</td><td class="e">wxy</td><td>男士</td><td></td><td class="b">启用</td><td class="l e"></td></tr>
<tr class="alt"><td><i class="cb"></i></td><td class="d">000005</td><td class="u">李秀英</td><td class="e">lxy</td><td>男士</td><td></td><td class="b">启用</td><td class="l e"></td></tr>
<tr><td><i class="cb"></i></td><td class="d">000006</td><td class="u">李娜</td><td class="e">ln</td><td>男士</td><td></td><td class="b">启用</td><td class="l e"></td></tr>
<tr class="alt"><td><i class="cb"></i></td><td class="d">000007</td><td class="u">刘伟</td><td class="e">lw</td><td>男士</td><td></td><td class="b">启用</td><td class="l e">dd</td></tr>
<tr><td><i class="cb"></i></td><td class="d">000008</td><td class="u">张敏</td><td class="e">zm</td><td>男士</td><td></td><td class="b">启用</td><td class="l e"></td></tr>
<tr class="alt"><td><i class="cb"></i></td><td class="d">000009</td><td class="u">小强</td><td class="e">xq</td><td>男士</td><td></td><td class="b">启用</td><td class="l e"></td></tr>
<tr><td><i class="cb"></i></td><td class="d">000010</td><td class="u">小鱼</td><td class="e">xy</td><td>男士</td><td></td><td class="b">启用</td><td class="l e"></td></tr>
<tr class="alt"><td><i class="cb"></i></td><td class="d">000011</td><td class="u">雪儿</td><td class="e">xe</td><td>男士</td><td></td><td class="b">启用</td><td class="l e"></td></tr>
<tr><td><i class="cb"></i></td><td class="d">000012</td><td class="u">瓶子</td><td class="e">xe</td><td>男士</td><td></td><td class="b">启用</td><td class="l e"></td></tr>
<tr class="alt"><td><i class="cb"></i></td><td class="d">000013</td><td class="u">王芳</td><td class="e">wf</td><td>男士</td><td></td><td class="b">启用</td><td class="l e"></td></tr>
<tr><td><i class="cb"></i></td><td class="d">000000</td><td class="u">管理员</td><td class="e">system</td><td>男士</td><td></td><td class="b">启用</td><td class="l e"></td></tr>
</table>

<div class="abs" style="left:345px;top:635px;width:860px;height:40px;border-top:1px solid #d0d0d0;background:linear-gradient(#fafafa,#eee)"></div><div class="abs" style="left:348px;top:642px;line-height:16px;white-space:nowrap">检索到 16 条记录，显示第 1 条 - 第 15 条</div><div class="abs" style="left:978px;top:642px;line-height:16px;white-space:nowrap">第 1 页 / 共 2 页</div><div class="abs" style="left:920px;top:638px"><svg width="210" height="24" viewBox="0 0 210 24" ><g fill="#c2d8f2" stroke="#7da9dc" stroke-width=".9" stroke-linejoin="round">
<path d="M5.500 2h3v16h-3zM18.500 2v16l-9-8z"/>
<path d="M38.500 2v16l-7-8zM45 2v16l-7-8z"/>
<path d="M166 2v16l7-8zM172.500 2v16l7-8z"/>
<path d="M191.500 2v16l8-8zM199.500 2h3v16h-3z"/>
</g></svg></div><div class="abs" style="left:1132px;top:638px;width:40px;height:22px;border:1px solid #aaa;background:#fff;line-height:22px;padding-left:4px;font-size:13px">15</div><div class="abs" style="left:1153px;top:640px;width:17px;height:19px;border:1px solid #8c8c8c;background:linear-gradient(#f4f4f4,#dcdcdc);box-shadow:inset 0 0 0 1px #fff"><svg width="15" height="17" viewBox="0 0 15 17"><path d="M4 6.500h7l-3.500 4z" fill="#000"/></svg></div><div class="abs" style="left:917px;top:637px;width:1px;height:30px;background:#d5d5d5"></div><div class="abs" style="left:970px;top:637px;width:1px;height:30px;background:#d5d5d5"></div><div class="abs" style="left:1076px;top:637px;width:1px;height:30px;background:#d5d5d5"></div><div class="abs" style="left:1131px;top:637px;width:1px;height:30px;background:#d5d5d5"></div>
</div>
</div>
</body>
</html>
